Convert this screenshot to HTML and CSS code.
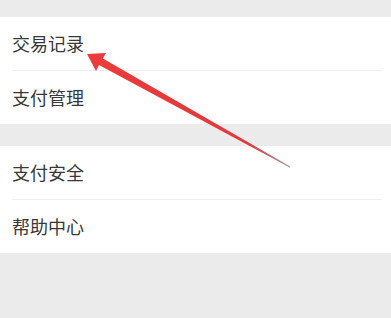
FILE: index.html
```html
<!DOCTYPE html>
<html lang="zh">
<head>
    <meta charset="UTF-8">
    <meta name="viewport" content="width=device-width, initial-scale=1.0">
    <title>钱包设置</title>
    <link rel="stylesheet" href="styles.css">
</head>
<body>
    <div class="page">
        <ul class="group">
            <li class="item">交易记录</li>
            <li class="item">支付管理</li>
        </ul>
        <ul class="group">
            <li class="item">支付安全</li>
            <li class="item">帮助中心</li>
        </ul>

        <!-- 标注箭头 -->
        <svg class="arrow" width="391" height="318" viewBox="0 0 391 318">
            <defs>
                <linearGradient id="tail" x1="87" y1="54" x2="290" y2="167" gradientUnits="userSpaceOnUse">
                    <stop offset="0" stop-color="#ec3b3b"/>
                    <stop offset="0.8" stop-color="#e0393b"/>
                    <stop offset="1" stop-color="#8a6a70" stop-opacity="0.7"/>
                </linearGradient>
            </defs>
            <polygon fill="url(#tail)" points="87,54 106,53 102.9,58.5 290.3,166.6 289.7,167.4 99,65.1 96,71"/>
        </svg>
    </div>
</body>
</html>
```

FILE: styles.css
```css
*{
    margin: 0;
    padding: 0;
}
body{
    background-color: #ebebeb;
    font-family: "Noto Sans CJK SC", "Noto Sans", sans-serif;
}
.page{
    position: relative;
    height: 318px;
    padding-top: 17px;
    box-sizing: border-box;
}
ul{
    list-style: none;
}
.group{
    background-color: #fff;
    padding-left: 12px;
    padding-right: 9px;
    margin-bottom: 22px;
}
.item{
    height: 53px;
    line-height: 53px;
    font-size: 18px;
    color: #383838;
}
.item + .item{
    border-top: 1px solid #efefef;
}
/* 箭头 */
.arrow{
    position: absolute;
    left: 0;
    top: 0;
}
```
